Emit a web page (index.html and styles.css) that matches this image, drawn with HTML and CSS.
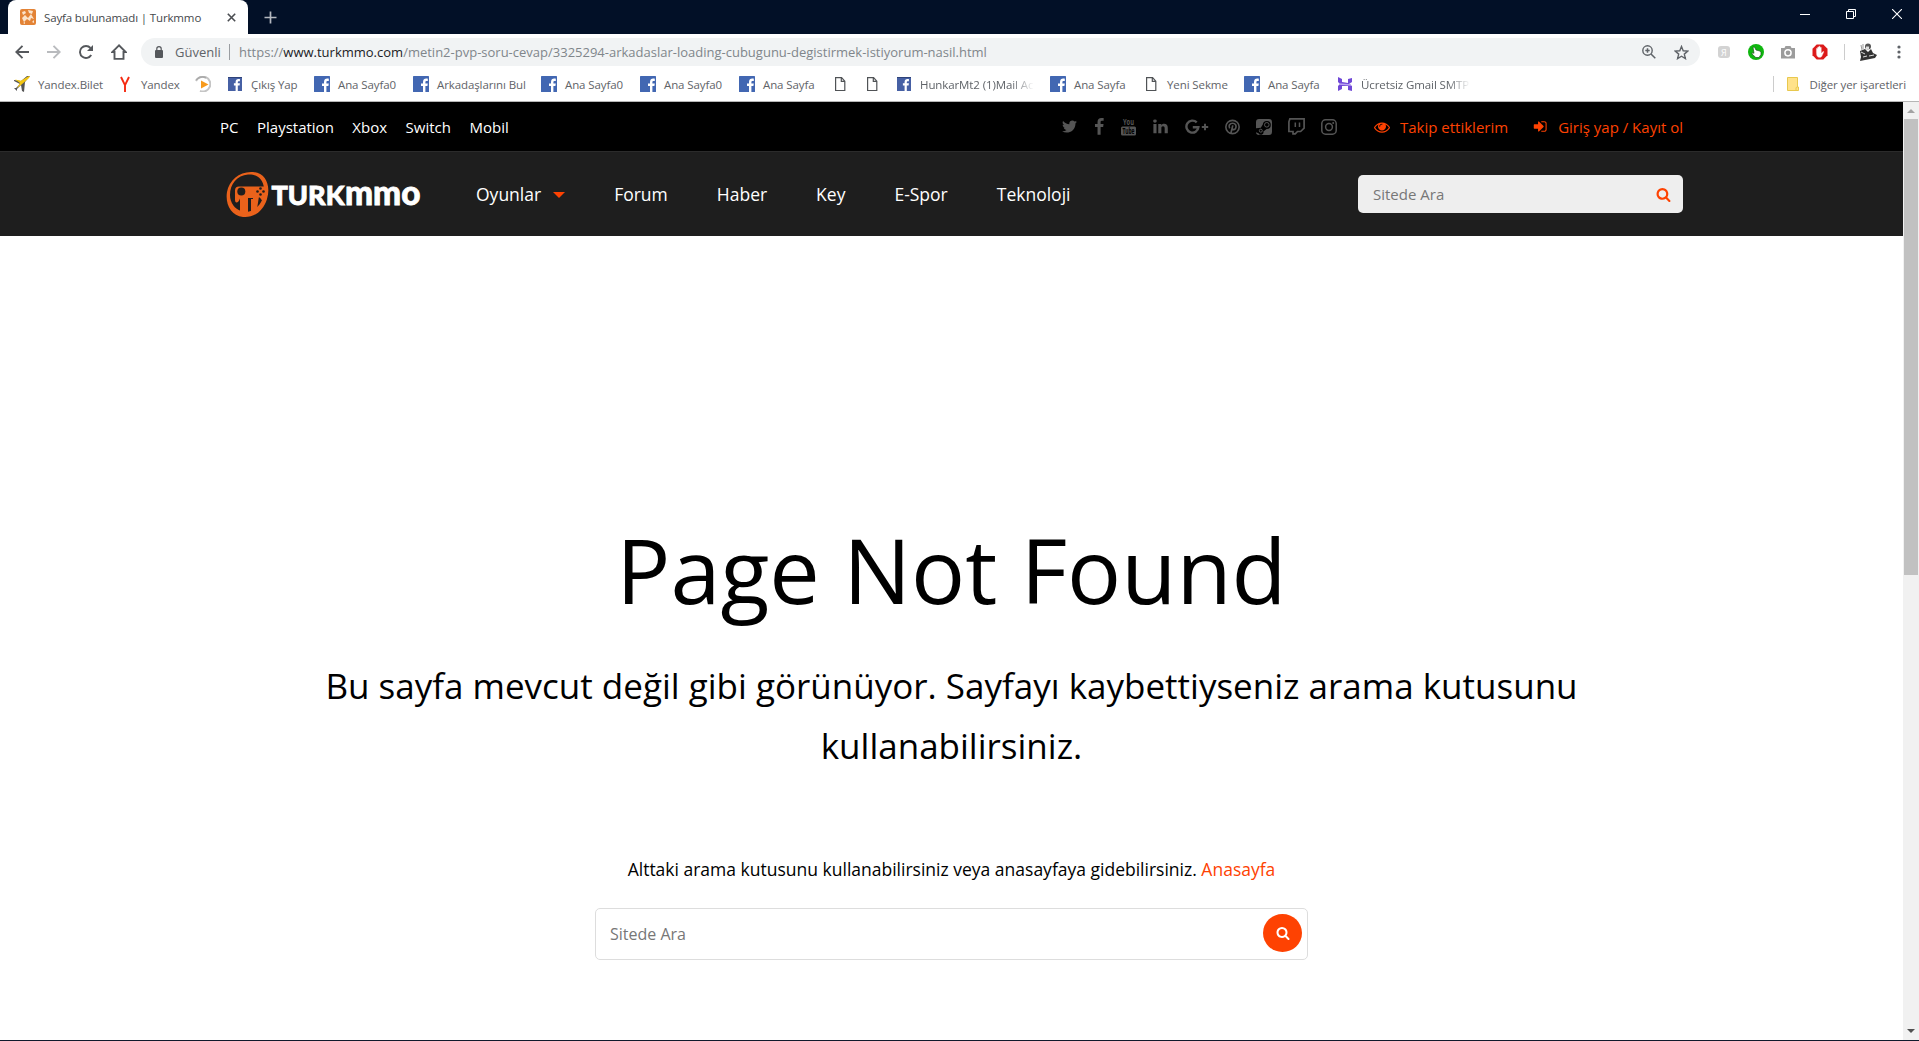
FILE: index.html
```
<!DOCTYPE html>
<html lang="tr">
<head>
  <meta charset="UTF-8" />
  <meta name="viewport" content="width=device-width, initial-scale=1.0"/>
  <title>Sayfa bulunamadı | Turkmmo</title>
  <link rel="stylesheet" href="styles.css">
</head>
<body>

  <!-- shared icons -->
  <svg class="defs" width="0" height="0">
    <symbol id="fb" viewBox="0 0 16 16">
      <rect width="16" height="16" rx="0.6" fill="#4267b2"/>
      <path d="M10 16V10H8V7.6h2V6c0-2.3 1.3-3.4 3.3-3.4.8 0 1.3.1 1.5.1v2.2h-1.1c-1 0-1.3.5-1.3 1.3v1.4h2.4l-.4 2.4h-2V16z" fill="#fff"/>
    </symbol>
    <symbol id="fb-old" viewBox="0 0 16 16">
      <rect x="1" y="1" width="14" height="14" fill="#4660a4"/>
      <rect x="1" y="1" width="14" height="1" fill="#2f4379"/>
      <path d="M8.6 15V9.6H6.9V7.3h1.7V6c0-2 1.1-3 2.8-3h1.5v2.2h-1c-.9 0-1.1.4-1.1 1.1v1h2.1l-.3 2.3h-1.8V15z" fill="#fff"/>
    </symbol>
    <symbol id="page" viewBox="0 0 16 16">
      <path d="M3.6 1.7h6l3.2 3.5v9.3H3.600zM9.300 1.700v3.700h3.500" fill="none" stroke="#505356" stroke-width="1.200"/>
    </symbol>
    <symbol id="search" viewBox="0 0 1792 1792">
      <path d="M1216 832q0-185-131.500-316.500t-316.500-131.500-316.500 131.500-131.500 316.500 131.500 316.500 316.500 131.500 316.500-131.500 131.500-316.500zm512 832q0 52-38 90t-90 38q-54 0-90-38l-343-342q-179 124-399 124-143 0-273.500-55.500t-225-150-150-225-55.500-273.500 55.500-273.500 150-225 225-150 273.500-55.500 273.500 55.500 225 150 150 225 55.500 273.500q0 220-124 399l343 343q37 37 37 90z" fill="currentColor"/>
    </symbol>
  </svg>

  <div class="tabs">
    <div class="tab">
      <svg width="16" height="16" viewBox="0 0 16 16"><rect width="16" height="16" rx="2" fill="#e38336"/><path d="M2 3l3-1 1 2-3 2zM8 1l5 1-1 3-3-1zM2 9l3-3 3 3 3-4 3 5-3-1-1 3-3-2-3 3zM3 14l2-1v2zM12 13l2-2v3z" fill="#fbe3ca"/></svg>
      <span class="tab-title">Sayfa bulunamadı | Turkmmo</span>
      <svg class="tab-close" width="9" height="9" viewBox="0 0 9 9"><path d="M.8.800l7.400 7.400M8.200.8L.8 8.200" stroke="#4a4d51" stroke-width="1.600"/></svg>
    </div>
    <svg class="new-tab" width="13" height="13" viewBox="0 0 13 13"><path d="M6.500.500v12M.5 6.500h12" stroke="#b4b8bf" stroke-width="1.700"/></svg>
    <div class="window-buttons">
      <svg width="10" height="10" viewBox="0 0 10 10"><path d="M0 5.500h10" stroke="#fff"/></svg>
      <svg width="10" height="10" viewBox="0 0 10 10"><path d="M.5 2.500h7v7h-7zM2.500 2.500v-2h7v7h-2" fill="none" stroke="#fff"/></svg>
      <svg width="10" height="10" viewBox="0 0 10 10"><path d="M0 0l10 10M10 0L0 10" stroke="#fff" stroke-width="1.100"/></svg>
    </div>
  </div>

  <div class="toolbar">
    <svg width="14" height="14" viewBox="0 0 14 14"><path d="M14 7H1.500M7.500.800L1.300 7l6.200 6.200" fill="none" stroke="#55585c" stroke-width="1.900"/></svg>
    <svg width="14" height="14" viewBox="0 0 14 14"><path d="M0 7h12.500M6.500.800L12.700 7l-6.200 6.200" fill="none" stroke="#b9bbbe" stroke-width="1.900"/></svg>
    <svg width="14" height="14" viewBox="0 0 14 14"><path d="M12.200 10A6 6 0 1 1 11.500 3" fill="none" stroke="#55585c" stroke-width="1.900"/><path d="M14 0v6H8z" fill="#55585c"/></svg>
    <svg width="16" height="16" viewBox="0 0 16 16"><path d="M8 1.300L1.300 8H3.500v6.900h9V8h2.200z" fill="none" stroke="#55585c" stroke-width="1.900"/></svg>
    <div class="address">
      <svg width="8" height="12" viewBox="0 0 8 12"><rect y="4" width="8" height="8" rx="1" fill="#55585c"/><path d="M1.800 5V2.800a2.200 2.200 0 0 1 4.400 0V5" fill="none" stroke="#55585c" stroke-width="1.200"/></svg>
      <span class="secure">Güvenli</span>
      <span class="url">https://<b>www.turkmmo.com</b>/metin2-pvp-soru-cevap/3325294-arkadaslar-loading-cubugunu-degistirmek-istiyorum-nasil.html</span>
      <svg class="zoom" width="14" height="14" viewBox="0 0 14 14"><path d="M9 9l4.300 4.300M5.500 3.300v4.400M3.300 5.500h4.400" stroke="#5f6368" stroke-width="1.500"/><circle cx="5.500" cy="5.500" r="4.700" fill="none" stroke="#5f6368" stroke-width="1.400"/></svg>
      <svg class="star" width="15" height="15" viewBox="0 0 15 15"><path d="M7.500 1.500l1.700 4.300 4.600.300-3.500 3 1.100 4.500-3.900-2.400-3.900 2.400 1.100-4.500-3.500-3 4.600-.3z" fill="none" stroke="#5f6368" stroke-width="1.400"/></svg>
    </div>
    <div class="extensions">
      <svg width="16" height="16" viewBox="0 0 16 16"><rect x="2" y="2" width="12" height="12" rx="3" fill="#d3d3d3"/><text x="5" y="12" font-size="9" fill="#fff">Я</text></svg>
      <svg width="16" height="16" viewBox="0 0 16 16"><circle cx="8" cy="8" r="8" fill="#0fb60f"/><path d="M5 3.500q1-1.200 1.800 0L8 6l4 1q1.500 1 1 3.500l-2 3H7.800L4 10q-.5-1.500 1-1.200l1 .5z" fill="#fff" stroke="#1b541b" stroke-width=".7"/></svg>
      <svg width="16" height="16" viewBox="0 0 16 16"><path d="M1 4h3.500l1-2h5l1 2H15v10.500H1z" fill="#9c9c9c"/><circle cx="8" cy="8.800" r="3.100" fill="none" stroke="#fff" stroke-width="1.500"/></svg>
      <svg width="16" height="16" viewBox="0 0 16 16"><path d="M4.700.500h6.600l4.200 4.200v6.600l-4.200 4.200H4.700L.5 11.300V4.700z" fill="#dc1a1a"/><path d="M4.300 8.500V4.600q.7-1 1.200 0V3.200q.7-1 1.300 0v-.7q.7-1 1.300 0v1q.7-1 1.300 0V9l1.500-1.600q1.300-.3 1 .7l-2 4.200q-.7 1.200-2.200 1.200-3.400 0-3.400-5z" fill="#fff" stroke="#f0a0a0" stroke-width=".3"/></svg>
    </div>
    <svg class="avatar" width="18" height="18" viewBox="0 0 18 18"><circle cx="9" cy="3.500" r="3" fill="#555"/><path d="M7 3.500h3v3H7z" fill="#ddd"/><path d="M2 2l1 5M4 1v5" stroke="#999"/><path d="M1 8l5-2 3 3 3-3 2 4 4 2-2 3-15 3 1-4z" fill="#333"/><path d="M2 9l4 2M4 14l4-1M10 13l5-1" stroke="#ddd"/></svg>
    <svg class="menu" width="4" height="14" viewBox="0 0 4 14"><circle cx="2" cy="2" r="1.600" fill="#5f6368"/><circle cx="2" cy="7" r="1.600" fill="#5f6368"/><circle cx="2" cy="12" r="1.600" fill="#5f6368"/></svg>
  </div>

  <div class="bookmarks">
    <div class="bookmark"><svg viewBox="0 0 16 16"><path d="M0 4l7 1 6-5 3 0-5 6-1 10-2-1-1-6-4 4 0 2-3-3 2 0 4-4-6-3z" fill="#555"/><path d="M1 3.500l6 1.300L14 .5l2-.5-1 2-8 7-4 3 3-5z" fill="#f3c613"/></svg><span>Yandex.Bilet</span></div>
    <div class="bookmark"><svg viewBox="0 0 16 16"><path d="M4 1l4 8.200V16M12 1L8 9.200" fill="none" stroke="#f52b12" stroke-width="1.900"/></svg><span>Yandex</span></div>
    <div class="bookmark"><svg viewBox="0 0 16 16"><path d="M1 5a7.500 7.500 0 1 1 4 10" fill="none" stroke="#c5c5c5" stroke-width="2"/><path d="M1 4q5-5 10-2" fill="none" stroke="#aaa" stroke-width="1.500"/><path d="M6 4.500L13.500 8.500 6 12.500z" fill="#f79a1c"/></svg></div>
    <div class="bookmark"><svg><use href="#fb-old"/></svg><span>Çıkış Yap</span></div>
    <div class="bookmark"><svg><use href="#fb"/></svg><span>Ana Sayfa0</span></div>
    <div class="bookmark"><svg><use href="#fb"/></svg><span>Arkadaşlarını Bul</span></div>
    <div class="bookmark"><svg><use href="#fb"/></svg><span>Ana Sayfa0</span></div>
    <div class="bookmark"><svg><use href="#fb"/></svg><span>Ana Sayfa0</span></div>
    <div class="bookmark"><svg><use href="#fb"/></svg><span>Ana Sayfa</span></div>
    <div class="bookmark"><svg><use href="#page"/></svg></div>
    <div class="bookmark"><svg><use href="#page"/></svg></div>
    <div class="bookmark fade"><svg><use href="#fb-old"/></svg><span>HunkarMt2 (1)Mail Ac</span></div>
    <div class="bookmark"><svg><use href="#fb"/></svg><span>Ana Sayfa</span></div>
    <div class="bookmark"><svg><use href="#page"/></svg><span>Yeni Sekme</span></div>
    <div class="bookmark"><svg><use href="#fb"/></svg><span>Ana Sayfa</span></div>
    <div class="bookmark fade"><svg viewBox="0 0 16 16"><path d="M1 1l4 2v3l6 1V3l4-1v4l-3 2 3 2v5l-4-1v-4l-6 0v3l-4 2v-5l2-2-2-2z" fill="#7048d6"/><path d="M2 8l12 1" stroke="#b9a2f2" stroke-width="1.500"/></svg><span>Ücretsiz Gmail SMTP</span></div>
    <div class="bookmark other"><svg viewBox="0 0 16 16"><path d="M2.500 1.500h10v9.500h1v3.500h-11z" fill="#ffe28a" stroke="#e8c84e"/><path d="M11 14.500v-2.500q0-1 1.500-1" fill="none" stroke="#e8c84e"/></svg><span>Diğer yer işaretleri</span></div>
  </div>

  <div class="viewport">
    <div class="site">
      <div class="topbar">
        <div class="platforms">
          <a>PC</a><a>Playstation</a><a>Xbox</a><a>Switch</a><a>Mobil</a>
        </div>
        <div class="social">
          <svg width="17" height="17" viewBox="0 0 1792 1792"><path d="M1684 408q-67 98-162 167 1 14 1 42 0 130-38 259.500t-115.500 248.500-184.500 210.500-258 146-323 54.500q-271 0-496-145 35 4 78 4 225 0 401-138-105-2-188-64.500t-114-159.500q33 5 61 5 43 0 85-11-112-23-185.500-111.500t-73.500-205.500v-4q68 38 146 41-66-44-105-115t-39-154q0-88 44-163 121 149 294.500 238.500t371.500 99.500q-8-38-8-74 0-134 94.500-228.500t228.500-94.500q140 0 236 102 109-21 205-78-37 115-142 178 93-10 186-50z"/></svg>
          <svg width="11" height="17" viewBox="400 0 1060 1700"><path d="M1343 12v264h-157q-86 0-116 36t-30 108v189h293l-39 296h-254v759h-306v-759h-255v-296h255v-218q0-186 104-288.500t277-102.500q147 0 228 12z"/></svg>
          <svg width="15" height="18" viewBox="0 0 15 18"><text x="2" y="7" font-size="8" textLength="11" lengthAdjust="spacingAndGlyphs">You</text><rect y="8.500" width="15" height="9" rx="1.500"/><text class="cut" x="1.500" y="16" font-size="8" textLength="12" lengthAdjust="spacingAndGlyphs">Tube</text></svg>
          <svg width="17" height="17" viewBox="0 0 1792 1792"><path d="M477 625v991h-330v-991h330zm21-306q1 73-50.500 122t-135.500 49h-2q-82 0-132-49t-50-122q0-74 51.500-122.500t134.500-48.500 133 48.500 51 122.500zm1166 729v568h-329v-530q0-105-40.500-164.500t-126.500-59.500q-63 0-105.500 34.500t-63.500 85.500q-11 30-11 81v553h-329q2-399 2-647t-1-296l-1-48h329v144h-2q20-32 41-56t56.500-52 87-43.500 114.500-15.500q171 0 275 113.500t104 332.500z"/></svg>
          <svg width="24" height="16" viewBox="0 0 24 16"><path class="line" d="M11.700 3.400A6 6 0 1 0 13.400 8.200H7.800" stroke-width="2.400"/><path class="line" d="M20 4.800v6.400M16.800 8h6.400" stroke-width="1.900"/></svg>
          <svg width="15" height="16" viewBox="0 0 16 16"><circle class="line" cx="8" cy="8" r="7.100" stroke-width="1.700"/><path class="line" d="M5 9.500C3.200 6.500 5.200 4 8.200 4s4.200 2.500 3.300 5c-.8 2.300-3.200 2.300-3.700.600M8.300 6.300L6.300 14.500" stroke-width="1.800"/></svg>
          <svg class="steam" width="16" height="16" viewBox="0 0 16 16"><path d="M3 0h10a3 3 0 0 1 3 3v10a3 3 0 0 1-3 3H3a3 3 0 0 1-3-2.800l2.500 1A2.600 2.600 0 0 0 7.400 12.500l3.200-2.600A4 4 0 1 0 6.800 5.600L4.800 8.700 0 9.200V3a3 3 0 0 1 3-3z"/><circle class="line" cx="10.800" cy="5.800" r="2.300" stroke-width="1"/><circle class="line" cx="4.800" cy="11.700" r="1.500" stroke-width="1"/></svg>
          <svg width="17" height="17" viewBox="0 0 17 17"><path class="line" d="M1.900.900h14.200v9.200l-3.500 3.400H9.500l-2.300 2.400H5v-2.400H.9V3.800z" stroke-width="1.700"/><path class="line" d="M7.300 4.500v4.500M11.500 4.500v4.500" stroke-width="1.500"/></svg>
          <svg width="16" height="16" viewBox="0 0 16 16"><rect class="line" x=".8" y=".8" width="14.400" height="14.400" rx="3.800" stroke-width="1.500"/><circle class="line" cx="8" cy="8" r="3.400" stroke-width="1.500"/><circle cx="12.200" cy="3.900" r="1"/></svg>
        </div>
        <div class="account">
          <a><svg width="16" height="16" viewBox="0 0 1792 1792"><path d="M1664 960q-152-236-381-353 61 104 61 225 0 185-131.500 316.500t-316.500 131.500-316.500-131.500-131.500-316.500q0-121 61-225-229 117-381 353 133 205 333.500 326.500t434.500 121.500 434.500-121.500 333.500-326.500zm-720-384q0-20-14-34t-34-14q-125 0-214.500 89.500t-89.500 214.500q0 20 14 34t34 14 34-14 14-34q0-86 61-147t147-61q20 0 34-14t14-34zm848 384q0 34-20 69-140 230-376.500 368.500t-499.500 138.500-499.500-139-376.500-368q-20-35-20-69t20-69q140-229 376.500-368t499.500-139 499.500 139 376.500 368q20 35 20 69z"/></svg><span class="follow">Takip ettiklerim</span></a>
          <a><svg width="15" height="15" viewBox="100 0 1664 1792"><path d="M1312 896q0 26-19 45l-544 544q-19 19-45 19t-45-19-19-45v-288h-448q-26 0-45-19t-19-45v-384q0-26 19-45t45-19h448v-288q0-26 19-45t45-19 45 19l544 544q19 19 19 45zm352-352v704q0 119-84.500 203.500t-203.500 84.500h-320q-13 0-22.500-9.500t-9.500-22.500q0-4-1-20t-.5-26.500 3-23.500 10-19.500 20.500-6.500h320q66 0 113-47t47-113v-704q0-66-47-113t-113-47h-312l-11.500-1-11.500-3-8-5.500-7-9-2-13.500q0-4-1-20t-.5-26.500 3-23.500 10-19.500 20.500-6.500h320q119 0 203.500 84.500t84.500 203.500z"/></svg><span>Giriş yap / Kayıt ol</span></a>
        </div>
      </div>

      <div class="header">
        <svg class="logo" width="196" height="48" viewBox="0 0 196 48">
          <path d="M27 1C40 2 45 15 41 28 37 41 27 47 17 46 5 45-1 33 1 21 3 9 14 0 27 1zM22 3.500C11 4.500 4 13 4 24c0 8 5 14 11 16 4 2 10 1 15-3 6-5 9-13 8-20C37 8 31 3 22 3.500z" fill="#ea621b" fill-rule="evenodd"/>
          <path d="M13 15.500h25q3.500 0 3.300 4l-.5 6.500q-.3 4-3 4-2 0-4-3.500h-1L31 38q-1 3-4 4.500V27h-5v14.500l-8 1V27.500q-1.500 4-3.500 4-1.500 0-1.500-3v-9q0-4 4-4z" fill="#ea621b"/>
          <circle cx="15.300" cy="20.500" r="4" fill="#1e1e1e"/>
          <path d="M25 28l3 0v16h-3z" fill="#ea621b"/>
          <g fill="#1e1e1e"><circle cx="34.500" cy="17.500" r="1.300"/><circle cx="34.500" cy="23.500" r="1.300"/><circle cx="31.500" cy="20.500" r="1.300"/><circle cx="37.500" cy="20.500" r="1.300"/></g>
          <text class="logo-text" x="45.500" y="34" font-size="26" textLength="73" lengthAdjust="spacingAndGlyphs">TURK</text>
          <text class="logo-text" x="119" y="34" font-size="35" textLength="75.500" lengthAdjust="spacingAndGlyphs">mmo</text>
        </svg>
        <div class="nav">
          <a class="dropdown">Oyunlar</a><a>Forum</a><a>Haber</a><a>Key</a><a>E-Spor</a><a>Teknoloji</a>
        </div>
        <form class="site-search">
          <input type="text" placeholder="Sitede Ara">
          <svg width="15" height="15"><use href="#search"/></svg>
        </form>
      </div>

      <div class="not-found">
        <h1>Page Not Found</h1>
        <h2>Bu sayfa mevcut değil gibi görünüyor. Sayfayı kaybettiyseniz arama kutusunu kullanabilirsiniz.</h2>
        <p>Alttaki arama kutusunu kullanabilirsiniz veya anasayfaya gidebilirsiniz. <a>Anasayfa</a></p>
        <form class="page-search">
          <input type="text" placeholder="Sitede Ara">
          <button type="button"><svg width="14" height="14"><use href="#search"/></svg></button>
        </form>
      </div>
    </div>

    <div class="scrollbar">
      <span class="arrow up"></span>
      <span class="thumb"></span>
      <span class="arrow down"></span>
    </div>
  </div>

</body>
</html>
```
FILE: styles.css
```
* {
  box-sizing: border-box;
}

body {
  margin: 0;
  height: 1041px;
  overflow: hidden;
  display: flex;
  flex-direction: column;
  font-family: "Open Sans", sans-serif;
  background: #fff;
  border-bottom: 1px solid #101a2c;
}

svg {
  display: block;
  flex-shrink: 0;
}

.defs {
  position: absolute;
}

/* browser window */
.tabs {
  height: 34px;
  flex-shrink: 0;
  display: flex;
  align-items: center;
  padding-left: 8px;
  background: #021027;
}

.tab {
  width: 240px;
  height: 34px;
  display: flex;
  align-items: center;
  padding: 0 12px;
  background: #fff;
  border-radius: 8px 8px 0 0;
}

.tab-title {
  margin-left: 8px;
  font-size: 11.5px;
  letter-spacing: -0.14px;
  color: #45484c;
  white-space: nowrap;
}

.tab-close {
  margin-left: auto;
}

.new-tab {
  margin-left: 16px;
}

.window-buttons {
  display: flex;
  gap: 36px;
  margin: -6px 17px 0 auto;
}

.toolbar {
  height: 35px;
  flex-shrink: 0;
  display: flex;
  align-items: center;
  padding: 1px 18px 0 15px;
}

.toolbar > svg {
  margin-right: 18px;
}

.address {
  width: 1559px;
  height: 28px;
  display: flex;
  align-items: center;
  margin-left: -4px;
  padding: 0 11px 0 14px;
  border-radius: 14px;
  background: #f1f3f4;
  font-size: 13px;
  color: #80868b;
  white-space: nowrap;
}

.secure {
  width: 55px;
  margin-left: 12px;
  border-right: 1px solid #9a9da1;
  line-height: 16px;
  color: #5f6368;
}

.url {
  margin-left: 9px;
}

.url b {
  font-weight: normal;
  color: #202124;
}

.zoom {
  margin-left: auto;
}

.star {
  margin-left: 18px;
}

.extensions {
  display: flex;
  gap: 16px;
  margin-left: 16px;
  padding-right: 16px;
  border-right: 1px solid #ccc;
}

.toolbar > .avatar {
  margin: 0 0 0 14px;
}

.toolbar > .menu {
  margin: 0 0 0 auto;
}

.bookmarks {
  height: 33px;
  flex-shrink: 0;
  display: grid;
  grid-template-columns: 103px 78px 32px 87px 99px 128px 99px 99px 93px 32px 32px 154px 93px 101px 93px 133px 1fr;
  align-items: center;
  padding: 0 13px 2px 14px;
  border-bottom: 1px solid #b6b6b6;
  font-size: 11.5px;
  letter-spacing: -0.1px;
  color: #5f6368;
}

.bookmark {
  display: flex;
  align-items: center;
  gap: 8px;
  white-space: nowrap;
}

.bookmark svg {
  width: 16px;
  height: 16px;
}

.fade span {
  width: 114px;
  overflow: hidden;
  -webkit-mask-image: linear-gradient(to right, #000 80%, transparent);
  mask-image: linear-gradient(to right, #000 80%, transparent);
}

.other {
  justify-self: end;
  padding-left: 11px;
  border-left: 1px solid #ccc;
}

/* page */
.viewport {
  flex: 1;
  display: flex;
}

.site {
  flex: 1;
}

.topbar {
  height: 49px;
  display: flex;
  align-items: center;
  padding: 0 220px;
  background: #000;
  font-size: 15px;
  color: #fff;
}

.platforms {
  display: flex;
  gap: 18.5px;
}

.social {
  display: flex;
  align-items: center;
  gap: 16px;
  margin-left: auto;
  fill: #555;
}

.social .line {
  fill: none;
  stroke: #555;
}

.social .cut {
  fill: #000;
}

.social text {
  font-weight: bold;
}

.account {
  display: flex;
  gap: 25px;
  margin-left: 37px;
  color: #fe4202;
  fill: #fe4202;
}

.account a {
  display: flex;
  align-items: center;
  gap: 10px;
}

.header {
  height: 85px;
  display: flex;
  align-items: center;
  padding: 0 220px 0 226px;
  background: #1e1e1e;
  border-top: 1px solid #2b2b2b;
}

.logo {
  margin-top: 1px;
}

.logo-text {
  font-family: Lato, sans-serif;
  font-weight: 900;
  fill: #fff;
  stroke: #fff;
  stroke-width: 0.8;
}

.nav {
  display: flex;
  gap: 49px;
  margin-left: 54px;
  font-size: 17.5px;
  color: #fff;
}

.dropdown::after {
  content: "";
  display: inline-block;
  margin-left: 12px;
  vertical-align: 3px;
  border: 6px solid transparent;
  border-top-color: #fe4202;
  border-bottom: 0;
}

.site-search {
  width: 325px;
  height: 38px;
  display: flex;
  align-items: center;
  margin-left: auto;
  padding: 0 12px 0 15px;
  background: #eee;
  border-radius: 5px;
  color: #fe4202;
}

input {
  flex: 1;
  padding: 0;
  border: none;
  outline: none;
  background: none;
  font-family: inherit;
  font-size: 15px;
}

input::placeholder {
  color: #777;
}

.not-found {
  padding-top: 270px;
  text-align: center;
  color: #000;
}

.not-found h1 {
  margin: 0;
  font-size: 90px;
  font-weight: 400;
  line-height: 126px;
}

.not-found h2 {
  width: 1300px;
  margin: 24px auto 0;
  font-size: 35px;
  font-weight: 400;
  line-height: 60px;
}

.not-found p {
  margin: 78px 0 0;
  font-size: 17.5px;
  line-height: 30px;
}

.not-found a {
  color: #fe4202;
}

.page-search {
  width: 713px;
  height: 52px;
  display: flex;
  align-items: center;
  margin: 24px auto 0;
  padding: 0 5px 0 14px;
  border: 1px solid #ddd;
  border-radius: 5px;
}

.page-search input {
  font-size: 16px;
}

.page-search button {
  width: 39px;
  height: 38px;
  display: flex;
  align-items: center;
  justify-content: center;
  margin-top: -2px;
  padding: 0;
  border: none;
  border-radius: 50%;
  background: #fe4202;
  color: #fff;
}

.scrollbar {
  width: 16px;
  display: flex;
  flex-direction: column;
  align-items: center;
  background: #f1f1f1;
}

.thumb {
  width: 14px;
  height: 456px;
  margin-top: 6px;
  background: #c1c1c1;
}

.arrow {
  border: 4px solid transparent;
}

.up {
  margin-top: 7px;
  border-top: 0;
  border-bottom-color: #a3a3a3;
}

.down {
  margin: auto 0 7px;
  border-bottom: 0;
  border-top-color: #505050;
}
```
